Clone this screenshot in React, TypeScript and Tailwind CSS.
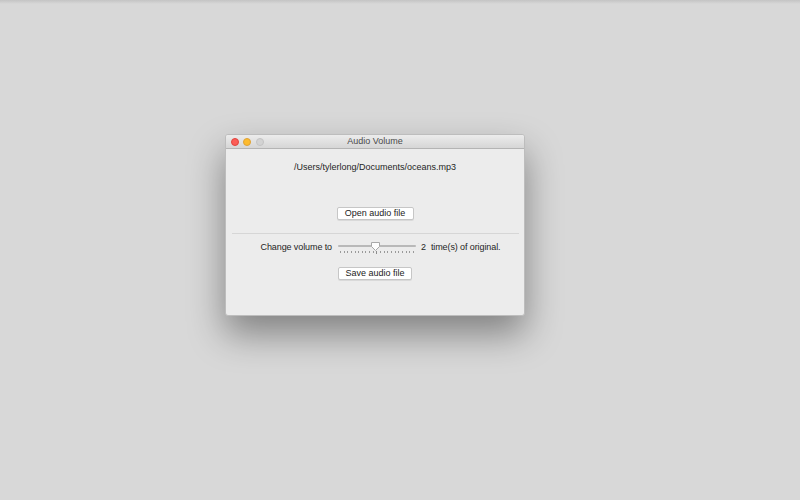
import React from "react";

function Slider() {
  const ticks = Array.from({ length: 21 }, (_, i) => i);
  return (
    <div className="relative w-[78px] h-[16px]">
      <div className="absolute left-0 right-0 top-[6px] h-[2px] rounded-full bg-[#b9b9b9]" />
      <div className="absolute left-[2px] right-[2px] top-[12px] flex justify-between">
        {ticks.map((i) => (
          <div key={i} className={i === 10 ? "w-px h-[3px] bg-[#8d8d8d]" : "w-px h-[2px] bg-[#9a9a9a]"} />
        ))}
      </div>
      <svg className="absolute left-[32px] top-[2px]" width="11" height="11" viewBox="0 0 11 11">
        <path d="M1.5 1.5 H9.5 V5.5 L5.5 9.5 L1.5 5.5 Z" fill="#fdfdfd" stroke="#a8a8a8" strokeWidth="1" strokeLinejoin="round" />
      </svg>
    </div>
  );
}

function Button({ label, w }: { label: string; w: string }) {
  return (
    <div
      className={`${w} h-[13px] flex items-center justify-center rounded-[2px] bg-white border border-[#c6c6c6] shadow-[0_1px_0_rgba(0,0,0,0.08)] text-[9px] leading-none text-[#222]`}
    >
      {label}
    </div>
  );
}

export default function App() {
  return (
    <div
      className="w-[800px] h-[500px] bg-[#d8d8d8] relative overflow-hidden"
      style={{ fontFamily: '"Liberation Sans", Arial, sans-serif' }}
    >
      <div className="absolute left-0 right-0 top-0 h-[4px] bg-gradient-to-b from-[#c4c4c4] to-[#d8d8d8]" />
      <div className="absolute left-[225px] top-[134px] w-[300px] h-[182px] flex flex-col bg-[#ececec] rounded-[3px] border border-[#bdbdbd] shadow-[0_18px_36px_rgba(0,0,0,0.4)] overflow-hidden">
        <div className="relative h-[14px] shrink-0 bg-gradient-to-b from-[#ececec] to-[#d6d6d6] border-b border-[#b4b4b4] flex items-center">
          <div className="flex items-center gap-[4.5px] pl-[4.5px]">
            <div className="w-[8px] h-[8px] rounded-full bg-[#fc5d57] border border-[#e0443e]" />
            <div className="w-[8px] h-[8px] rounded-full bg-[#fdbb2e] border border-[#dea236]" />
            <div className="w-[8px] h-[8px] rounded-full bg-[#d3d3d3] border border-[#c3c3c3]" />
          </div>
          <div className="absolute inset-0 flex items-center justify-center text-[9px] text-[#4a4a4a]">
            Audio Volume
          </div>
        </div>
        <div className="flex flex-col items-center">
          <div className="mt-[13px] text-[9px] leading-[10px] text-[#1e1e1e]">/Users/tylerlong/Documents/oceans.mp3</div>
          <div className="mt-[35px]">
            <Button label="Open audio file" w="w-[77px]" />
          </div>
          <div className="mt-[13px] w-[287px] h-px bg-[#d6d6d6]" />
          <div className="mt-[5px] w-full flex items-center text-[9px] leading-none text-[#1e1e1e] tracking-[-0.1px]">
            <div className="w-[112px] shrink-0 flex justify-end pr-[6px]">Change volume to</div>
            <Slider />
            <div className="ml-[5px]">2</div>
            <div className="ml-[5px]">time(s) of original.</div>
          </div>
          <div className="mt-[12px]">
            <Button label="Save audio file" w="w-[74px]" />
          </div>
        </div>
      </div>
    </div>
  );
}
